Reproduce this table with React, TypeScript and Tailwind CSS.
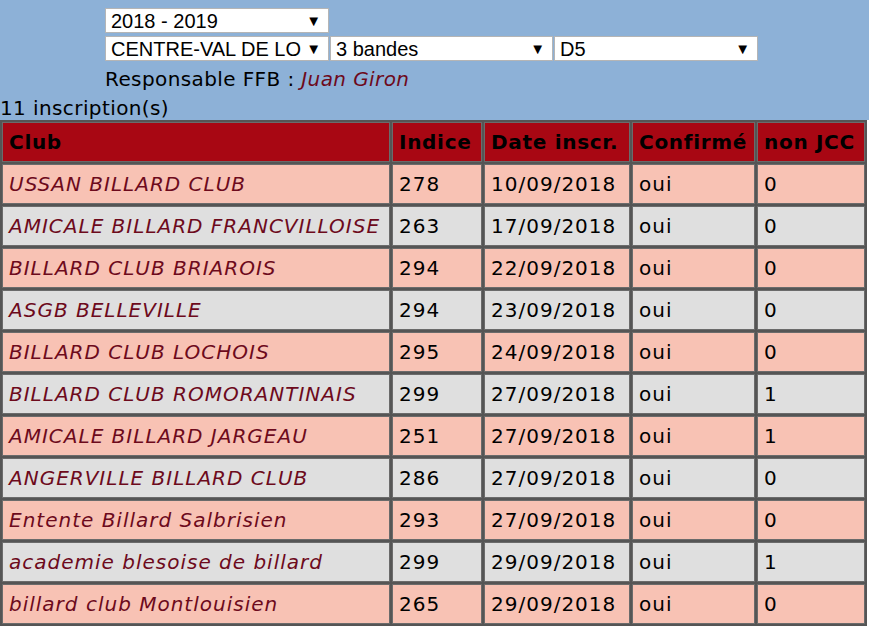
import React from "react";

type Row = {
  club: string;
  indice: number;
  date: string;
  confirme: string;
  nonJcc: number;
};

const ROWS: Row[] = [
  { club: "USSAN BILLARD CLUB", indice: 278, date: "10/09/2018", confirme: "oui", nonJcc: 0 },
  { club: "AMICALE BILLARD FRANCVILLOISE", indice: 263, date: "17/09/2018", confirme: "oui", nonJcc: 0 },
  { club: "BILLARD CLUB BRIAROIS", indice: 294, date: "22/09/2018", confirme: "oui", nonJcc: 0 },
  { club: "ASGB BELLEVILLE", indice: 294, date: "23/09/2018", confirme: "oui", nonJcc: 0 },
  { club: "BILLARD CLUB LOCHOIS", indice: 295, date: "24/09/2018", confirme: "oui", nonJcc: 0 },
  { club: "BILLARD CLUB ROMORANTINAIS", indice: 299, date: "27/09/2018", confirme: "oui", nonJcc: 1 },
  { club: "AMICALE BILLARD JARGEAU", indice: 251, date: "27/09/2018", confirme: "oui", nonJcc: 1 },
  { club: "ANGERVILLE BILLARD CLUB", indice: 286, date: "27/09/2018", confirme: "oui", nonJcc: 0 },
  { club: "Entente Billard Salbrisien", indice: 293, date: "27/09/2018", confirme: "oui", nonJcc: 0 },
  { club: "academie blesoise de billard", indice: 299, date: "29/09/2018", confirme: "oui", nonJcc: 1 },
  { club: "billard club Montlouisien", indice: 265, date: "29/09/2018", confirme: "oui", nonJcc: 0 },
];

// select look-alike, arrow drawn as a glyph
function FakeSelect({ value, className = "" }: { value: string; className?: string }) {
  return (
    <div
      className={`h-[25px] bg-white border border-[#b5b5b5] flex items-center pl-[5px] pr-[7px] text-[20px] leading-none text-black overflow-hidden ${className}`}
      style={{ fontFamily: '"Liberation Sans", Arial, sans-serif' }}
    >
      <span className="flex-1 whitespace-nowrap overflow-hidden">{value}</span>
      <span className="text-[15px] ml-[4px]">▼</span>
    </div>
  );
}

export default function App() {
  return (
    <div
      className="min-h-[626px] w-[869px] bg-white text-black"
      style={{ fontFamily: '"DejaVu Sans", Verdana, sans-serif' }}
    >
      {/* Filters */}
      <div className="bg-[#8db1d7] pt-[8px]">
        <div className="pl-[105px]">
          <FakeSelect value="2018 - 2019" className="w-[224px]" />
          <div className="flex gap-[1px] mt-[3px]">
            <FakeSelect value="CENTRE-VAL DE LO" className="w-[224px]" />
            <FakeSelect value="3 bandes" className="w-[223px]" />
            <FakeSelect value="D5" className="w-[204px]" />
          </div>
          <div className="mt-[6px] h-[24px] leading-[24px] text-[20px] tracking-[0.4px]">
            Responsable FFB : <span className="italic text-[#6d0a1c]">Juan Giron</span>
          </div>
        </div>
        <div className="pt-[4px] h-[29px] leading-[26px] text-[20px] tracking-[0.4px]">11 inscription(s)</div>
      </div>

      {/* Table */}
      <table className="table-fixed w-[867px] border-separate border-spacing-[2px] bg-[#555555] text-[20px] tracking-[1px]">
        <thead>
          <tr className="bg-[#a80713] h-[40px] font-bold tracking-[0.7px] whitespace-nowrap">
            <th className="w-[388px] text-left px-[6px] border border-[#6b6b6b]">Club</th>
            <th className="w-[90px] text-left px-[6px] border border-[#6b6b6b]">Indice</th>
            <th className="w-[146px] text-left px-[6px] border border-[#6b6b6b]">Date inscr.</th>
            <th className="w-[123px] text-left px-[6px] border border-[#6b6b6b]">Confirmé</th>
            <th className="text-left px-[6px] border border-[#6b6b6b]">non JCC</th>
          </tr>
        </thead>
        <tbody>
          {ROWS.map((r, i) => (
            <tr key={i} className={`h-[40px] whitespace-nowrap ${i % 2 === 0 ? "bg-[#f8c2b4]" : "bg-[#dfdfdf]"}`}>
              <td className="px-[6px] italic text-[#6d0a1c] border border-[#6b6b6b]">{r.club}</td>
              <td className="px-[6px] border border-[#6b6b6b]">{r.indice}</td>
              <td className="px-[6px] border border-[#6b6b6b]">{r.date}</td>
              <td className="px-[6px] border border-[#6b6b6b]">{r.confirme}</td>
              <td className="px-[6px] border border-[#6b6b6b]">{r.nonJcc}</td>
            </tr>
          ))}
        </tbody>
      </table>
    </div>
  );
}
